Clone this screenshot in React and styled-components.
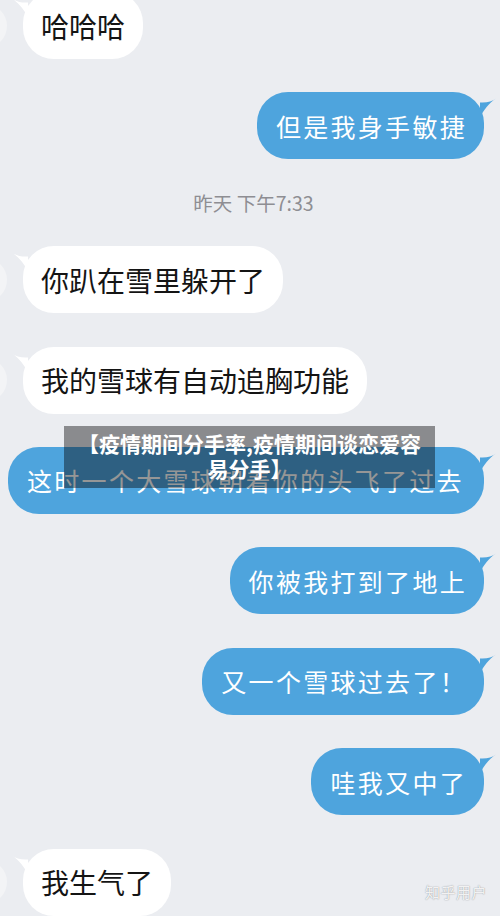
import React from "react";
import styled, { createGlobalStyle } from "styled-components";

const Global = createGlobalStyle`
  html, body {
    margin: 0;
    padding: 0;
    background: #ebedf1;
    overflow: hidden;
  }
  body {
    font-family: "Noto Sans CJK SC", "Noto Sans", sans-serif;
  }
`;

const Screen = styled.div`
  position: relative;
  width: 500px;
  height: 916px;
  overflow: hidden;
  background: #ebedf1;
`;

const Thread = styled.div`
  display: flex;
  flex-direction: column;
  gap: 33.4px;
  margin-top: -8px;
`;

const Row = styled.div`
  display: flex;
  align-items: center;
  justify-content: ${(p) => (p.$mine ? "flex-end" : "flex-start")};
  padding-right: ${(p) => (p.$mine ? "16px" : "0")};
`;

const Avatar = styled.div`
  flex: none;
  width: 44px;
  height: 44px;
  border-radius: 50%;
  background: #f3f4f6;
  margin-left: -37px;
  margin-right: 16px;
`;

const Bubble = styled.div`
  position: relative;
  height: 67px;
  box-sizing: border-box;
  display: flex;
  align-items: center;
  border-radius: 31px;
  white-space: nowrap;
  ${(p) =>
    p.$mine
      ? `
    background: #4ea4dd;
    color: #ffffff;
    font-size: 25px;
    letter-spacing: 2.3px;
    padding: 0 17px 0 19px;
  `
      : `
    background: #ffffff;
    color: #141414;
    font-size: 28px;
    padding: 0 18px;
  `}
  ${(p) => (p.$wide ? "width: 476px; padding-left: 19px;" : "")}
`;

const TailSvg = styled.svg`
  position: absolute;
  top: 5px;
  width: 16px;
  height: 20px;
  ${(p) =>
    p.$mine
      ? "right: -12px; transform: scaleX(-1);"
      : "left: -11px;"}
`;

const Tail = ({ mine }) => (
  <TailSvg $mine={mine} viewBox="0 0 16 20">
    <path
      d="M0 1.5 C4 4.5 9 6 16 5.5 L16 20 C12 13 7 6 0 1.5 Z"
      fill={mine ? "#4ea4dd" : "#ffffff"}
    />
  </TailSvg>
);

const Stamp = styled.div`
  height: 20px;
  line-height: 20px;
  text-align: center;
  padding-left: 7px;
  font-size: 19.5px;
  color: #8e8e93;
  font-family: "Noto Sans CJK SC", "Noto Sans", sans-serif;
`;

const Caption = styled.div`
  position: absolute;
  left: 64px;
  top: 426px;
  width: 371px;
  height: 62px;
  box-sizing: border-box;
  background: rgba(0, 0, 0, 0.41);
  color: #ffffff;
  font-weight: 700;
  font-size: 21px;
  line-height: 25px;
  text-align: center;
  padding-top: 5px;
  white-space: nowrap;
`;

const Watermark = styled.div`
  position: absolute;
  right: 13px;
  bottom: 14px;
  font-size: 15px;
  color: rgba(255, 255, 255, 0.9);
  text-shadow: 0 0 1px rgba(0, 0, 0, 0.35), 0 0 2px rgba(0, 0, 0, 0.15);
  letter-spacing: 0.5px;
`;

const messages = [
  { mine: false, text: "哈哈哈" },
  { mine: true, text: "但是我身手敏捷" },
  { stamp: "昨天 下午7:33" },
  { mine: false, text: "你趴在雪里躲开了" },
  { mine: false, text: "我的雪球有自动追胸功能" },
  { mine: true, wide: true, text: "这时一个大雪球朝着你的头飞了过去" },
  { mine: true, text: "你被我打到了地上" },
  { mine: true, text: "又一个雪球过去了！" },
  { mine: true, text: "哇我又中了" },
  { mine: false, text: "我生气了" },
];

export default function App() {
  return (
    <Screen>
      <Global />
      <Thread>
        {messages.map((m, i) =>
          m.stamp ? (
            <Stamp key={i}>{m.stamp}</Stamp>
          ) : (
            <Row key={i} $mine={m.mine}>
              {!m.mine && <Avatar />}
              <Bubble $mine={m.mine} $wide={m.wide}>
                <Tail mine={m.mine} />
                {m.text}
              </Bubble>
            </Row>
          )
        )}
      </Thread>
      <Caption>
        【疫情期间分手率,疫情期间谈恋爱容
        <br />
        易分手】
      </Caption>
      <Watermark>知乎用户</Watermark>
    </Screen>
  );
}
